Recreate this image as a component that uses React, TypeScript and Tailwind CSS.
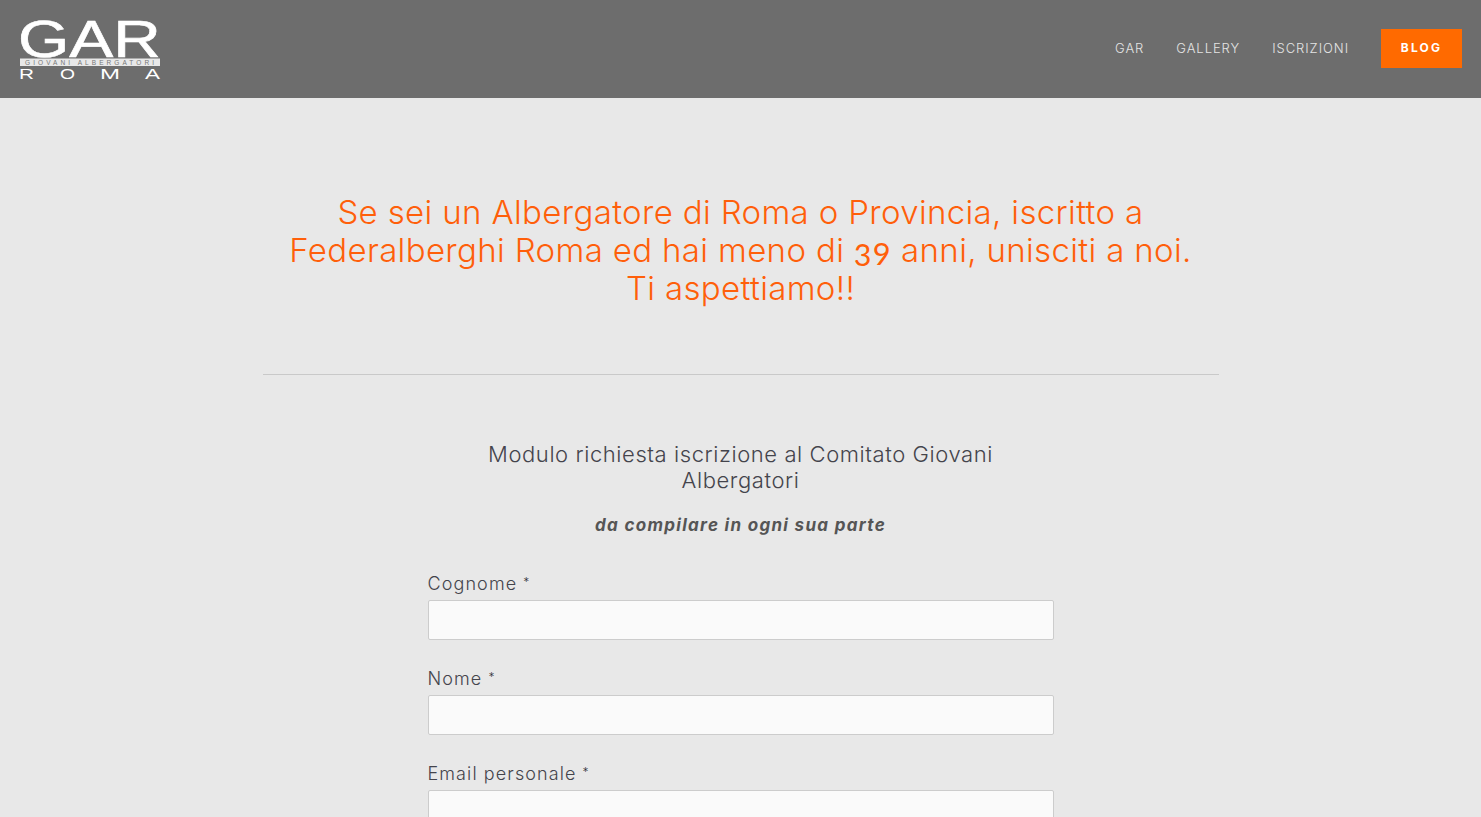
const body = "font-['Inter','Lato',sans-serif]"

function RomaLetter({ x, w, c }: { x: number; w: number; c: string }) {
  return (
    <text x={x} y="62" fontFamily="Liberation Sans" fontSize="14" fill="#fff" textLength={w} lengthAdjust="spacingAndGlyphs">
      {c}
    </text>
  )
}

function Logo() {
  return (
    <svg width="144" height="64" viewBox="0 0 144 64" className="block">
      <text x="-1" y="40" fontFamily="Liberation Sans" fontSize="52" fill="#fff" stroke="#fff" strokeWidth="0.6" textLength="143" lengthAdjust="spacingAndGlyphs">
        GAR
      </text>
      <rect x="1" y="41.5" width="140" height="7.5" fill="#e8e8e8" />
      <text x="6" y="47.8" fontFamily="Liberation Sans" fontSize="6.5" fill="#777" textLength="129" lengthAdjust="spacing">
        GIOVANI ALBERGATORI
      </text>
      <RomaLetter x={0} w={15} c="R" />
      <RomaLetter x={41} w={15} c="O" />
      <RomaLetter x={81} w={20} c="M" />
      <RomaLetter x={126} w={15} c="A" />
    </svg>
  )
}

function Field({ label }: { label: string }) {
  return (
    <div className="mb-[25px]">
      <label className="block text-[18px] leading-[28px] font-light tracking-[1.1px] text-[#44444c] mb-[2px]">
        {label}
        <sup className="text-[12px] ml-[6px] top-[-0.35em] text-[#33333a]">*</sup>
      </label>
      <input className="block w-full h-10 bg-[#fafafa] border border-[#cccccc] rounded-[2px]" />
    </div>
  )
}

export default function App() {
  return (
    <div className={`h-screen overflow-hidden bg-[#e8e8e8] ${body}`}>
      {/* Header */}
      <header className="h-[98px] bg-[#6d6d6d] flex items-center justify-between px-[19px]">
        <Logo />
        <nav className="flex items-center gap-8 text-[13px] font-light tracking-[0.95px] text-[#e4e4e4] -mt-[2px]">
          <a href="#" className="pt-[2px]">GAR</a>
          <a href="#" className="pt-[2px]">GALLERY</a>
          <a href="#" className="pt-[2px]">ISCRIZIONI</a>
          <a href="#" className="w-[81px] h-[39px] flex items-center justify-center bg-[#ff6a00] text-white text-[12px] font-bold tracking-[2.2px]">
            BLOG
          </a>
        </nav>
      </header>

      {/* Intro */}
      <section className="w-[956px] mx-auto pt-[95px] pb-[67px] border-b border-[#c9c9c9] text-center">
        <h1 className="text-[33px] leading-[38px] font-light tracking-[0.35px] text-[#ff5f0a]">
          Se sei un Albergatore di Roma o Provincia, iscritto a
          <br />
          Federalberghi Roma ed hai meno di <span className="font-['Lato'] font-normal leading-[10px] tracking-[1px] oldstyle-nums">39</span> anni, unisciti a noi.
          <br />
          Ti aspettiamo!!
        </h1>
      </section>

      {/* Form */}
      <section className="w-[626px] mx-auto pt-[66px]">
        <h2 className="w-[530px] mx-auto text-center text-[22px] leading-[26px] font-light tracking-[0.58px] text-[#44444c]">
          Modulo richiesta iscrizione al Comitato Giovani Albergatori
        </h2>
        <p className="mt-[19px] mb-[32px] text-center text-[17px] leading-[26px] font-bold italic tracking-[1.3px] text-[#555555]">
          da compilare in ogni sua parte
        </p>
        <Field label="Cognome" />
        <Field label="Nome" />
        <Field label="Email personale" />
      </section>
    </div>
  )
}
